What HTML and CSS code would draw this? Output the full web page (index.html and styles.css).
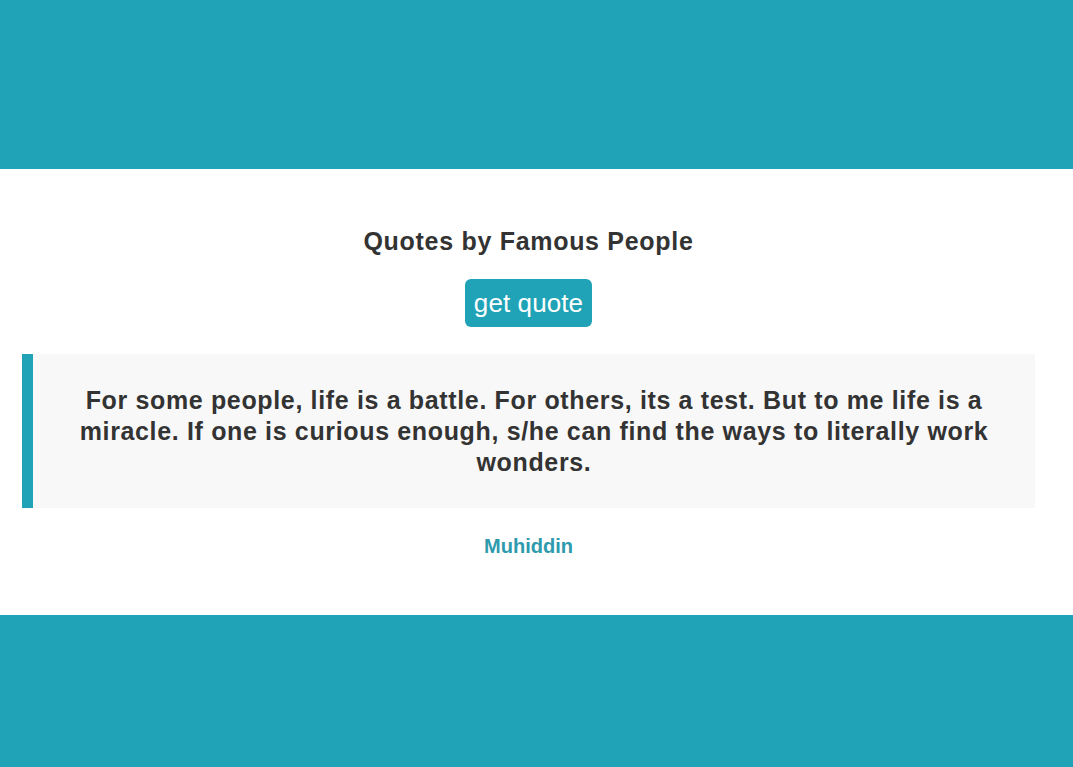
FILE: index.html
```html
<!DOCTYPE html>
<html lang="en">
<head>
<meta charset="utf-8">
<title>Quotes by Famous People</title>
<link rel="stylesheet" href="styles.css">
</head>
<body>
  <div class="page">
    <main class="card">
      <h1 class="title">Quotes by Famous People</h1>
      <button class="btn" type="button">get quote</button>
      <blockquote class="quote">
        <p class="quote-text">For some people, life is a battle. For others, its a test. But to me life is a miracle. If one is curious enough, s/he can find the ways to literally work wonders.</p>
      </blockquote>
      <p class="author">Muhiddin</p>
    </main>
  </div>
</body>
</html>
```

FILE: styles.css
```css
html, body {
  margin: 0;
  padding: 0;
  height: 100%;
}

body {
  background: #20a3b7;
  font-family: "Liberation Sans", Arial, sans-serif;
  color: #333333;
}

.page {
  padding-top: 169px;
}

.card {
  background: #ffffff;
  height: 446px;
  box-sizing: border-box;
  padding: 0 38px 0 22px;
  display: flex;
  flex-direction: column;
  align-items: center;
}

.title {
  margin: 57px 0 0 0;
  font-size: 25px;
  letter-spacing: 0.7px;
  font-weight: bold;
  line-height: 30px;
  color: #333333;
}

.btn {
  margin-top: 23px;
  background: #20a3b7;
  color: #ffffff;
  border: none;
  border-radius: 6px;
  font-family: "Liberation Sans", Arial, sans-serif;
  font-size: 26px;
  letter-spacing: 0.1px;
  line-height: 30px;
  height: 48px;
  padding: 0 9px;
}

.quote {
  margin: 27px 0 0 0;
  align-self: stretch;
  background: #f8f8f8;
  border-left: 11px solid #20a3b7;
  padding: 31px 34px 30px 34px;
}

.quote-text {
  margin: 0;
  text-align: center;
  font-size: 25px;
  letter-spacing: 0.65px;
  font-weight: bold;
  line-height: 31px;
}

.author {
  margin: 27px 0 0 0;
  font-size: 20px;
  font-weight: bold;
  line-height: 23px;
  color: #2e9aad;
}
```
